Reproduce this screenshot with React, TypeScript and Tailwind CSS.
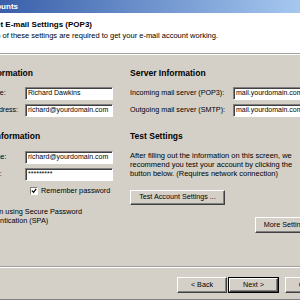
import React from 'react';

const inputClass =
  'flex h-[13px] items-center overflow-hidden whitespace-nowrap border border-t-[#808080] border-l-[#808080] border-b-white border-r-white bg-white pl-[2px] text-[7px] shadow-[inset_1px_1px_0_#404040]';

const buttonClass =
  'flex items-center justify-center whitespace-nowrap border border-t-white border-l-white border-b-[#404040] border-r-[#404040] bg-[#d4d0c8] text-[7.2px] shadow-[inset_-1px_-1px_0_#808080]';

function TextBox({ value, width }: { value: string; width: string }) {
  return <div className={`${inputClass} ${width} shrink-0`}>{value}</div>;
}

function CheckBox() {
  return (
    <div className="flex h-[8px] w-[8px] shrink-0 items-center justify-center border border-t-[#808080] border-l-[#808080] border-b-white border-r-white bg-white">
      <svg width="6" height="6" viewBox="0 0 7 7">
        <path d="M1 3 L3 5 L6 1" stroke="#000" strokeWidth="1.4" fill="none" />
      </svg>
    </div>
  );
}

function App() {
  return (
    <div className="flex h-[300px] w-[300px] flex-col overflow-hidden bg-[#d4d0c8] font-['Liberation_Sans',Arial,sans-serif] text-black">
      {/* title bar */}
      <div className="flex h-[13px] shrink-0 items-center bg-gradient-to-r from-[#3a5fa9] to-[#a6c8ef]">
        <div className="flex w-[18px] justify-end overflow-hidden whitespace-nowrap text-[8px] font-bold text-white">
          E-mail Accounts
        </div>
      </div>

      {/* header */}
      <div className="flex h-[41px] shrink-0 flex-col border-b border-b-[#a0a0a0] bg-white">
        <div className="mt-[7px] flex w-[92px] justify-end overflow-hidden whitespace-nowrap text-[8px] font-bold leading-[10px]">
          Internet E-mail Settings (POP3)
        </div>
        <div className="mt-[1px] flex w-[218px] justify-end overflow-hidden whitespace-nowrap text-[7.5px] leading-[9px]">
          Each of these settings are required to get your e-mail account working.
        </div>
      </div>
      <div className="h-[1px] shrink-0 bg-white" />

      {/* body */}
      <div className="flex h-[211px] shrink-0 text-[7px]">
        <div className="-ml-[35px] flex w-[165px] shrink-0 flex-col">
          <div className="mt-[13px] text-[8.5px] font-bold leading-[10px] whitespace-nowrap">User Information</div>
          <div className="mt-[9px] flex items-center">
            <div className="w-[60px] shrink-0 pl-[4px] whitespace-nowrap">Your Name:</div>
            <TextBox value="Richard Dawkins" width="w-[88px]" />
          </div>
          <div className="mt-[4px] flex items-center">
            <div className="w-[60px] shrink-0 pl-[4px] whitespace-nowrap">E-mail Address:</div>
            <TextBox value="richard@yourdomain.com" width="w-[88px]" />
          </div>

          <div className="mt-[14px] text-[8.5px] font-bold leading-[10px] whitespace-nowrap">Logon Information</div>
          <div className="mt-[10px] flex items-center">
            <div className="w-[60px] shrink-0 pl-[4px] whitespace-nowrap">User Name:</div>
            <TextBox value="richard@yourdomain.com" width="w-[88px]" />
          </div>
          <div className="mt-[4px] flex items-center">
            <div className="w-[60px] shrink-0 pl-[4px] whitespace-nowrap">Password:</div>
            <TextBox value="*********" width="w-[88px]" />
          </div>
          <div className="mt-[6px] flex items-center gap-[3px] pl-[65px]">
            <CheckBox />
            <span className="whitespace-nowrap text-[7.3px] leading-[8px]">Remember password</span>
          </div>
          <div className="mt-[12px] flex items-start gap-[4px] pl-[4px] text-[7.3px]">
            <CheckBox />
            <div className="leading-[9px]">
              <div className="whitespace-nowrap">Log on using Secure Password</div>
              <div className="whitespace-nowrap">Authentication (SPA)</div>
            </div>
          </div>
        </div>

        <div className="flex w-[170px] shrink-0 flex-col">
          <div className="mt-[13px] text-[8.5px] font-bold leading-[10px] whitespace-nowrap">Server Information</div>
          <div className="mt-[9px] flex items-center">
            <div className="w-[103px] shrink-0 whitespace-nowrap text-[7.2px]">Incoming mail server (POP3):</div>
            <TextBox value="mail.yourdomain.com" width="w-[88px]" />
          </div>
          <div className="mt-[4px] flex items-center">
            <div className="w-[103px] shrink-0 whitespace-nowrap text-[7.2px]">Outgoing mail server (SMTP):</div>
            <TextBox value="mail.yourdomain.com" width="w-[88px]" />
          </div>

          <div className="mt-[14px] text-[8.5px] font-bold leading-[10px] whitespace-nowrap">Test Settings</div>
          <div className="mt-[10px] text-[7.5px] leading-[9px]">
            <div className="whitespace-nowrap">After filling out the information on this screen, we</div>
            <div className="whitespace-nowrap">recommend you test your account by clicking the</div>
            <div className="whitespace-nowrap">button below. (Requires network connection)</div>
          </div>
          <div className={`${buttonClass} mt-[12px] h-[15px] w-[95px]`}>Test Account Settings ...</div>
          <div className={`${buttonClass} mt-[12px] ml-[125px] h-[16px] w-[70px]`}>More Settings ...</div>
        </div>
      </div>

      {/* etched separator */}
      <div className="h-[1px] shrink-0 bg-[#a0a0a0]" />
      <div className="h-[1px] shrink-0 bg-white" />

      {/* footer */}
      <div className="flex h-[31px] shrink-0 items-start pt-[9px] pl-[177px]">
        <div className={`${buttonClass} h-[16px] w-[50px] shrink-0`}>&lt; Back</div>
        <div className="ml-[1px] h-[16px] w-[51px] shrink-0 border border-black">
          <div className={`${buttonClass} h-full w-full`}>Next &gt;</div>
        </div>
        <div className={`${buttonClass} ml-[6px] h-[16px] w-[50px] shrink-0`}>Cancel</div>
      </div>

      <div className="h-[1px] shrink-0 bg-[#808080]" />
      <div className="h-[1px] shrink-0 bg-[#404040]" />
    </div>
  );
}

export default App;
